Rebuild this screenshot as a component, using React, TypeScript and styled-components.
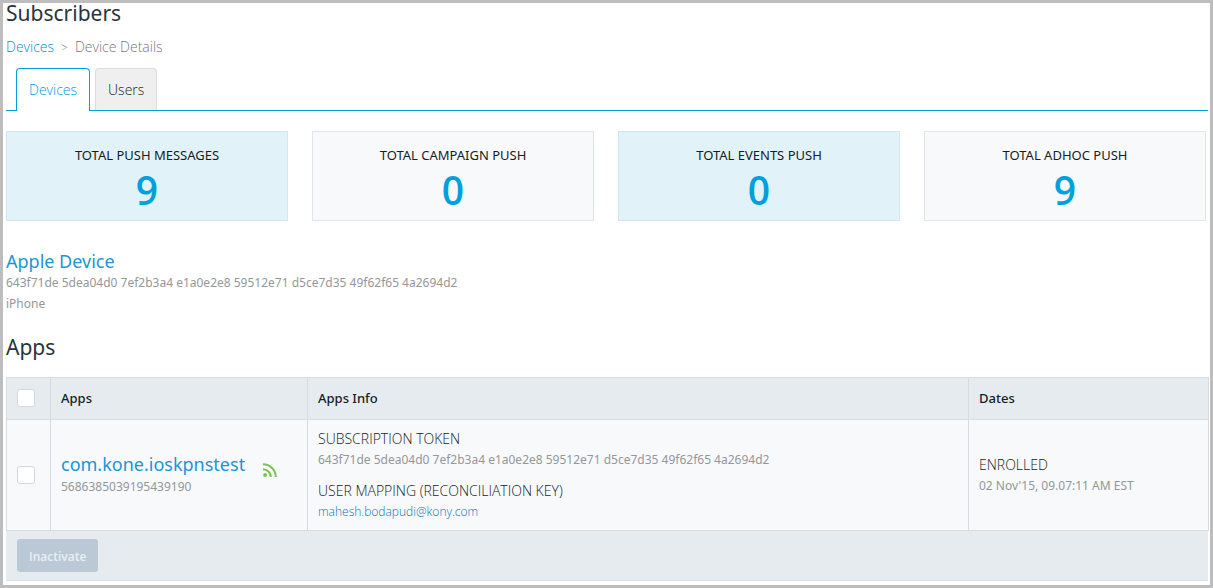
import React from "react";
import styled, { createGlobalStyle, css } from "styled-components";

const color = {
  ink: "#151d25",
  muted: "#94979a",
  accent: "#00a0dc",
  link: "#1b95d3",
  rule: "#d9dcde",
  band: "#e6ebef",
  row: "#f8f9fb",
};

const notoSans = `"Noto Sans", "Open Sans", sans-serif`;

const GlobalStyle = createGlobalStyle`
  *, *::before, *::after { box-sizing: border-box; }
  body {
    margin: 0;
    background: #fff;
    color: ${color.ink};
    font-family: "Open Sans", "Noto Sans", sans-serif;
    font-size: 14px;
    font-weight: 300;
    line-height: 20px;
  }
`;

const Page = styled.main`
  display: flex;
  flex-direction: column;
  border: 3px solid #bdbdbd;
  padding: 0 1px 4px 3px;
`;

const Title = styled.h1`
  margin: 0;
  color: #2a333c;
  font-family: ${notoSans};
  font-size: 21px;
  line-height: 20px;
  font-weight: 400;
`;

const Breadcrumb = styled.nav`
  display: flex;
  gap: 7px;
  margin-top: 14px;
  color: #74787b;
`;

const CrumbLink = styled.a`
  color: #008fd0;
  text-decoration: none;
`;

const Separator = styled.span`
  font-size: 12px;
  line-height: 22px;
`;

const TabBar = styled.div`
  display: flex;
  gap: 5px;
  margin-top: 9px;
  margin-right: 1px;
  padding-left: 10px;
  border-bottom: 1px solid ${color.accent};
`;

const Tab = styled.button<{ $active?: boolean }>`
  height: 42px;
  padding: 0 12px;
  border: 1px solid #dcdcdc;
  border-bottom: 0;
  border-radius: 4px 4px 0 0;
  background: #efefef;
  color: ${color.ink};
  font: inherit;
  ${(p) =>
    p.$active &&
    css`
      height: 43px;
      margin-bottom: -1px;
      padding-bottom: 1px;
      border-color: ${color.accent};
      background: #fff;
      color: ${color.accent};
    `}
`;

const Cards = styled.section`
  display: grid;
  grid-template-columns: repeat(4, 1fr);
  gap: 24px;
  margin-top: 20px;
  padding-right: 3px;
`;

const Card = styled.div<{ $tinted?: boolean }>`
  display: flex;
  flex-direction: column;
  align-items: center;
  height: 90px;
  padding-top: 13px;
  border: 1px solid ${(p) => (p.$tinted ? "#d3e7ef" : "#e3e6e8")};
  background: ${(p) => (p.$tinted ? "#e1f2f9" : color.row)};
`;

const CardLabel = styled.span`
  font-family: ${notoSans};
  font-size: 13px;
  font-weight: 400;
`;

const CardValue = styled.strong`
  color: ${color.accent};
  font-size: 39px;
  line-height: 50px;
  font-weight: 600;
`;

const Device = styled.section`
  display: flex;
  flex-direction: column;
  align-items: flex-start;
  margin-top: 29px;
`;

const NameLink = styled.a`
  color: ${color.link};
  font-family: ${notoSans};
  font-size: 18px;
  font-weight: 400;
  line-height: 22px;
  text-decoration: none;
`;

const Detail = styled.span`
  display: block;
  color: ${color.muted};
  font-family: ${notoSans};
  font-size: 12px;
  font-weight: 400;
  line-height: 21px;
`;

const Heading = styled.h2`
  margin: 22px 0 19px;
  color: #2a333c;
  font-family: ${notoSans};
  font-size: 21px;
  line-height: 22px;
  font-weight: 400;
`;

const Table = styled.table`
  width: 100%;
  table-layout: fixed;
  border-collapse: collapse;
`;

const HeadCell = styled.th<{ $width?: number }>`
  width: ${(p) => (p.$width ? `${p.$width}px` : "auto")};
  height: 42px;
  padding: 0 10px 2px;
  border: 1px solid ${color.rule};
  background: ${color.band};
  font-family: ${notoSans};
  font-size: 13px;
  font-weight: 500;
  text-align: left;
`;

const Cell = styled.td`
  height: 111px;
  padding: 0 10px;
  border: 1px solid ${color.rule};
  background: ${color.row};
  vertical-align: middle;
`;

const Check = styled.input`
  appearance: none;
  display: block;
  width: 18px;
  height: 18px;
  margin: 0;
  border: 1px solid #d5d8da;
  border-radius: 3px;
  background: #fff;
`;

const AppEntry = styled.div`
  display: flex;
  align-items: center;
  gap: 18px;
`;

const Pair = styled.div`
  & + & {
    margin-top: 10px;
  }
`;

const PairLabel = styled.span`
  display: block;
  line-height: 21px;
`;

const MailLink = styled.a`
  display: block;
  color: #0076c0;
  font-size: 12px;
  line-height: 21px;
  text-decoration: none;
`;

const Footer = styled.footer`
  margin-right: 1px;
  padding: 8px 11px;
  border-bottom: 1px solid ${color.rule};
  background: ${color.band};
`;

const ActionButton = styled.button`
  display: block;
  height: 33px;
  padding: 2px 12px 0;
  border: 0;
  border-radius: 3px;
  background: #bbc9d6;
  color: #e9eef3;
  font: inherit;
  font-size: 12px;
  font-weight: 600;
`;

const FeedGlyph = styled.svg`
  align-self: flex-start;
  margin-top: 10px;
`;

const FeedIcon = () => (
  <FeedGlyph width="15" height="15" viewBox="0 0 15 15" fill="none" stroke="#79c257" aria-hidden="true">
    <circle cx="2.1" cy="12" r="2" fill="#79c257" stroke="none" />
    <path d="M0 6.2A7.8 7.8 0 0 1 7.8 14" strokeWidth="2" />
    <path d="M0 1.2A12.8 12.8 0 0 1 12.8 14" strokeWidth="2" />
  </FeedGlyph>
);

const TOKEN = "643f71de 5dea04d0 7ef2b3a4 e1a0e2e8 59512e71 d5ce7d35 49f62f65 4a2694d2";

const totals = [
  { label: "TOTAL PUSH MESSAGES", value: 9 },
  { label: "TOTAL CAMPAIGN PUSH", value: 0 },
  { label: "TOTAL EVENTS PUSH", value: 0 },
  { label: "TOTAL ADHOC PUSH", value: 9 },
];

export default function App() {
  return (
    <>
      <GlobalStyle />
      <Page>
        <Title>Subscribers</Title>
        <Breadcrumb aria-label="Breadcrumb">
          <CrumbLink href="#devices">Devices</CrumbLink>
          <Separator>&gt;</Separator>
          <span>Device Details</span>
        </Breadcrumb>
        <TabBar role="tablist">
          <Tab role="tab" aria-selected="true" $active>
            Devices
          </Tab>
          <Tab role="tab" aria-selected="false">
            Users
          </Tab>
        </TabBar>
        <Cards>
          {totals.map((t, i) => (
            <Card key={t.label} $tinted={i % 2 === 0}>
              <CardLabel>{t.label}</CardLabel>
              <CardValue>{t.value}</CardValue>
            </Card>
          ))}
        </Cards>
        <Device>
          <NameLink href="#device">Apple Device</NameLink>
          <Detail>{TOKEN}</Detail>
          <Detail>iPhone</Detail>
        </Device>
        <Heading>Apps</Heading>
        <Table>
          <thead>
            <tr>
              <HeadCell $width={44}>
                <Check type="checkbox" aria-label="Select all apps" />
              </HeadCell>
              <HeadCell $width={257}>Apps</HeadCell>
              <HeadCell>Apps Info</HeadCell>
              <HeadCell $width={240}>Dates</HeadCell>
            </tr>
          </thead>
          <tbody>
            <tr>
              <Cell>
                <Check type="checkbox" aria-label="Select com.kone.ioskpnstest" />
              </Cell>
              <Cell>
                <AppEntry>
                  <div>
                    <NameLink href="#app">com.kone.ioskpnstest</NameLink>
                    <Detail>5686385039195439190</Detail>
                  </div>
                  <FeedIcon />
                </AppEntry>
              </Cell>
              <Cell>
                <Pair>
                  <PairLabel>SUBSCRIPTION TOKEN</PairLabel>
                  <Detail>{TOKEN}</Detail>
                </Pair>
                <Pair>
                  <PairLabel>USER MAPPING (RECONCILIATION KEY)</PairLabel>
                  <MailLink href="mailto:mahesh.bodapudi@kony.com">mahesh.bodapudi@kony.com</MailLink>
                </Pair>
              </Cell>
              <Cell>
                <PairLabel>ENROLLED</PairLabel>
                <Detail>02 Nov'15, 09.07:11 AM EST</Detail>
              </Cell>
            </tr>
          </tbody>
        </Table>
        <Footer>
          <ActionButton>Inactivate</ActionButton>
        </Footer>
      </Page>
    </>
  );
}
